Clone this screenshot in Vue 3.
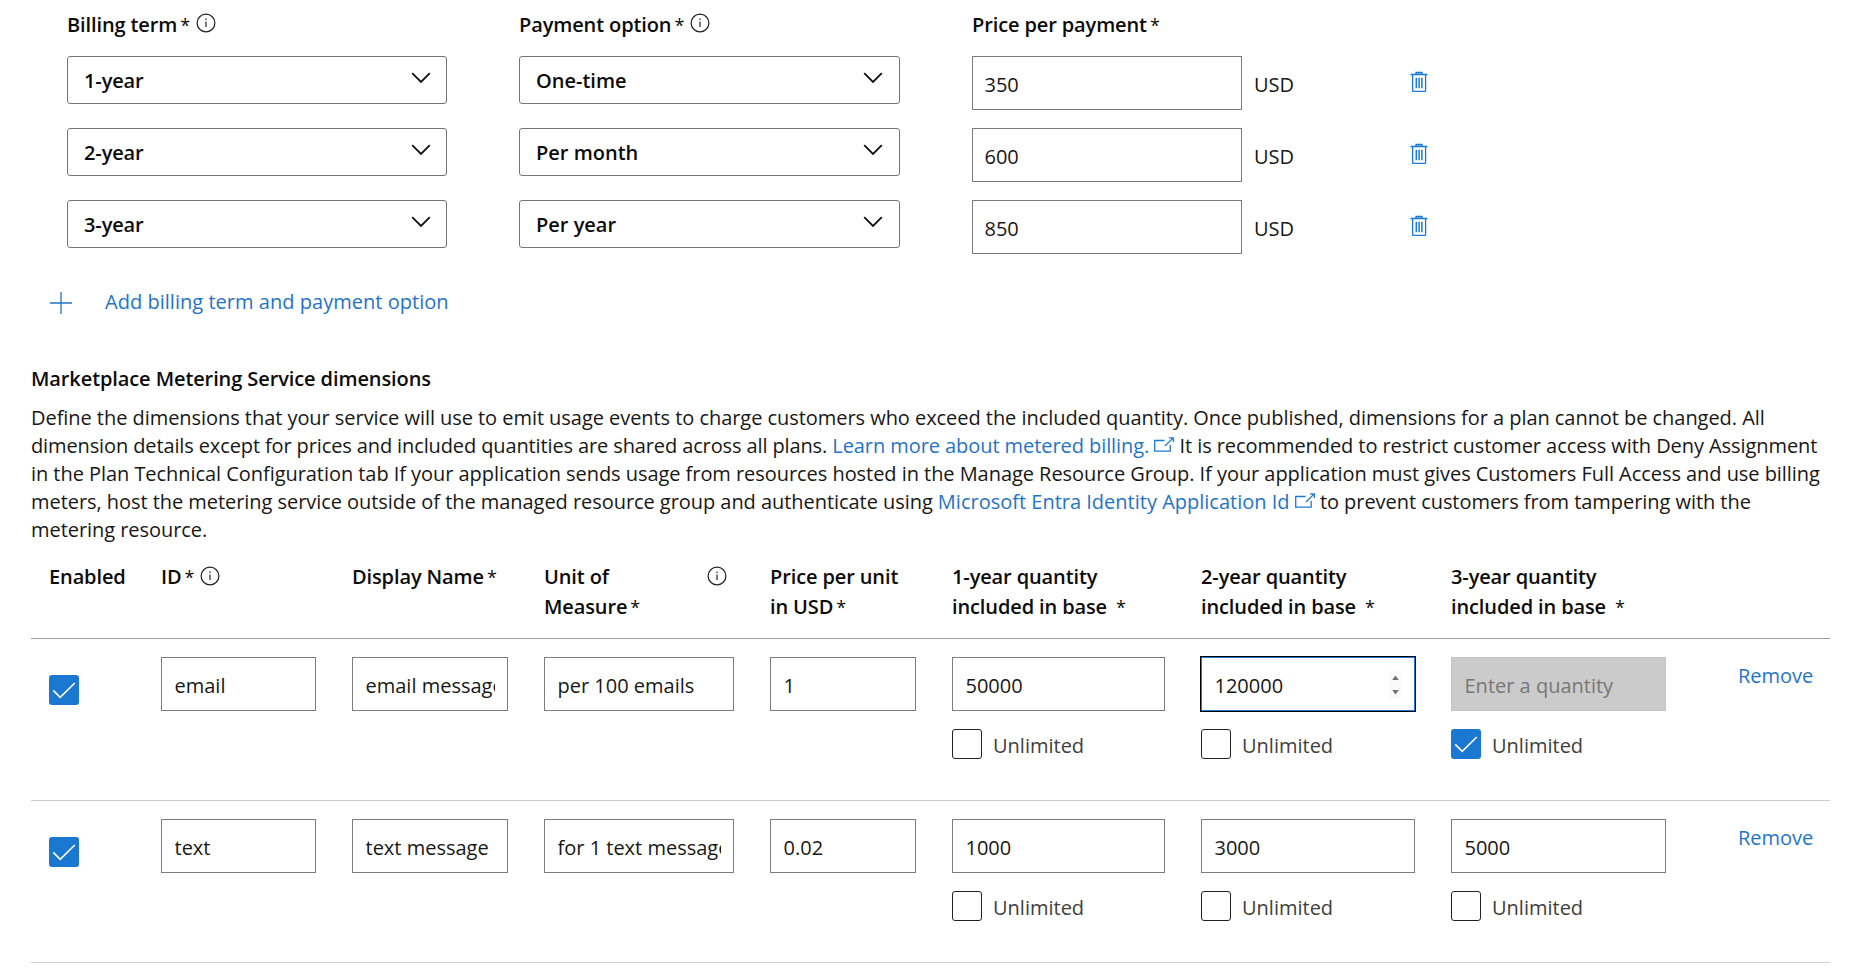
<script setup>
const terms = [
  { term: '1-year', option: 'One-time', price: '350' },
  { term: '2-year', option: 'Per month', price: '600' },
  { term: '3-year', option: 'Per year', price: '850' }
]

const columns = [
  { lines: ['Enabled'] },
  { lines: ['ID'], required: true, info: true },
  { lines: ['Display Name'], required: true },
  { lines: ['Unit of', 'Measure'], required: true, info: true, infoEnd: true },
  { lines: ['Price per unit', 'in USD'], required: true },
  { lines: ['1-year quantity', 'included in base'], required: true, wide: true },
  { lines: ['2-year quantity', 'included in base'], required: true, wide: true },
  { lines: ['3-year quantity', 'included in base'], required: true, wide: true },
  { lines: [] }
]

const dimensions = [
  {
    fields: [
      { value: 'email', size: 'w-id' },
      { value: 'email message', size: 'w-name' },
      { value: 'per 100 emails', size: 'w-unit' },
      { value: '1', size: 'w-price' }
    ],
    quantities: [
      { value: '50000', size: 'w-q1' },
      { value: '120000', size: 'w-q2', focused: true },
      { value: 'Enter a quantity', size: 'w-q3', disabled: true, unlimited: true }
    ]
  },
  {
    fields: [
      { value: 'text', size: 'w-id' },
      { value: 'text message', size: 'w-name' },
      { value: 'for 1 text message', size: 'w-unit' },
      { value: '0.02', size: 'w-price' }
    ],
    quantities: [
      { value: '1000', size: 'w-q1' },
      { value: '3000', size: 'w-q2' },
      { value: '5000', size: 'w-q3' }
    ]
  }
]
</script>

<template>
  <main class="page">
    <section class="pricing">
      <div class="terms-row labels">
        <div class="label">Billing term<span class="req">*</span>
          <svg class="info" viewBox="0 0 20 20"><circle cx="10" cy="10" r="8.9" /><path d="M10 8.6v5.4M10 5.6v1.5" /></svg>
        </div>
        <div class="label">Payment option<span class="req">*</span>
          <svg class="info" viewBox="0 0 20 20"><circle cx="10" cy="10" r="8.9" /><path d="M10 8.6v5.4M10 5.6v1.5" /></svg>
        </div>
        <div class="label">Price per payment<span class="req">*</span></div>
      </div>
      <div v-for="t in terms" :key="t.term" class="terms-row">
        <div class="select">
          <span>{{ t.term }}</span>
          <svg class="chevron" viewBox="0 0 20 12"><path d="M1.2 1.2 10 10l8.8-8.8" /></svg>
        </div>
        <div class="select option">
          <span>{{ t.option }}</span>
          <svg class="chevron" viewBox="0 0 20 12"><path d="M1.2 1.2 10 10l8.8-8.8" /></svg>
        </div>
        <div class="field"><span class="value">{{ t.price }}</span></div>
        <span class="currency">USD</span>
        <svg class="trash" viewBox="0 0 18 22">
          <path class="lid" d="M6 3.5v-2h6v2" />
          <path d="M.5 3.5h17M2.6 3.5v15.900a1 1 0 0 0 1 1h11a1 1 0 0 0 1-1v-15.900" />
          <path class="bars" d="M6.300 6.800v10.400M9.100 6.800v10.400M11.900 6.800v10.400" />
        </svg>
      </div>
      <a class="add">
        <svg class="plus" viewBox="0 0 22 22"><path d="M11 0v22M0 11h22" /></svg>
        <span>Add billing term and payment option</span>
      </a>
    </section>

    <section class="metering">
      <h2>Marketplace Metering Service dimensions</h2>
      <p>
        <span class="line">Define the dimensions that your service will use to emit usage events to charge customers who exceed the included quantity. Once published, dimensions for a plan cannot be changed. All</span>
        <span class="line snug"><span class="tight">dimension details except for prices and included quantities are shared across all plans.</span> <a>Learn more about metered billing. <svg class="ext" viewBox="0 0 20 15"><path d="M10.500 3.500H.7v10.600h15.500V8" /><path d="M11 9 19.200.9M15 .8h4.300v4.300" /></svg></a> It is recommended to restrict customer access with Deny Assignment</span>
        <span class="line">in the Plan Technical Configuration tab If your application sends usage from resources hosted in the Manage Resource Group. If your application must gives Customers Full Access and use billing</span>
        <span class="line">meters, host the metering service outside of the managed resource group and authenticate using <a class="loose">Microsoft Entra Identity Application Id <svg class="ext" viewBox="0 0 20 15"><path d="M10.500 3.500H.7v10.600h15.500V8" /><path d="M11 9 19.200.9M15 .8h4.300v4.300" /></svg></a> to prevent customers from tampering with the</span>
        <span class="line">metering resource.</span>
      </p>

      <div class="grid head">
        <div v-for="(c, i) in columns" :key="i" class="th">
          <div>
            <div v-for="(l, j) in c.lines" :key="l" class="th-line">{{ l }}<span v-if="c.required && j === c.lines.length - 1" class="req" :class="{ wide: c.wide }">*</span></div>
          </div>
          <svg v-if="c.info" class="info" :class="{ end: c.infoEnd }" viewBox="0 0 20 20"><circle cx="10" cy="10" r="8.9" /><path d="M10 8.6v5.4M10 5.6v1.5" /></svg>
        </div>
      </div>

      <div v-for="(d, i) in dimensions" :key="i" class="grid body">
        <div class="enabled">
          <span class="check on"><svg viewBox="0 0 30 30"><path d="M4.200 15.400l7 7L25.800 8" /></svg></span>
        </div>
        <div v-for="f in d.fields" :key="f.size">
          <div class="field" :class="f.size"><span class="value">{{ f.value }}</span></div>
        </div>
        <div v-for="q in d.quantities" :key="q.size">
          <div class="field" :class="[q.size, { focused: q.focused, disabled: q.disabled }]">
            <span class="value">{{ q.value }}</span>
            <svg v-if="q.focused" class="spin" viewBox="0 0 13 28"><rect width="13" height="28" /><path d="M3.200 9l3.300-4.600L9.800 9zM3.200 19l3.300 4.600L9.800 19z" /></svg>
          </div>
          <div class="unlimited">
            <span class="check" :class="{ on: q.unlimited }"><svg v-if="q.unlimited" viewBox="0 0 30 30"><path d="M4.200 15.400l7 7L25.800 8" /></svg></span>
            <span>Unlimited</span>
          </div>
        </div>
        <a class="remove">Remove</a>
      </div>
    </section>
  </main>
</template>

<style>
body {
  background: #fff;
}
</style>

<style scoped>
.page {
  width: 1860px;
  height: 973px;
  overflow: hidden;
  font: 20px/28px "Open Sans", "Noto Sans", sans-serif;
  color: #171717;
  background: #fff;
}
.page,
.page * {
  box-sizing: border-box;
}
svg {
  display: block;
  flex: none;
  fill: none;
}
a {
  color: #1f74c8;
}

/* Billing terms */
.pricing {
  height: 365px;
  padding: 11px 0 0 67px;
}
.terms-row {
  display: grid;
  grid-template-columns: 452px 453px 282px 156px 18px;
  height: 72px;
  align-items: start;
}
.labels {
  height: 45px;
}
.label {
  display: flex;
  color: #0c0c0c;
  font-weight: 600;
  letter-spacing: -0.12px;
}
.req {
  margin-left: 3px;
  font-size: 18px;
  font-weight: 500;
}
.req.wide {
  margin-left: 9px;
}
.info {
  width: 20px;
  height: 20px;
  margin: 2px 0 0 6px;
  stroke: #222;
  stroke-width: 1.2;
}
.select {
  display: flex;
  justify-content: space-between;
  width: 380px;
  height: 48px;
  padding: 10px 15px 0 16px;
  border: 1px solid #757575;
  border-radius: 3px;
  color: #0c0c0c;
  font-weight: 600;
  letter-spacing: -0.12px;
}
.select.option {
  width: 381px;
  padding-right: 16px;
  letter-spacing: 0;
}
.chevron {
  width: 20px;
  height: 12px;
  margin-top: 5px;
  stroke: #111;
  stroke-width: 1.8;
}
.field {
  display: flex;
  justify-content: space-between;
  width: 270px;
  height: 54px;
  padding: 14px 12px 0 11.5px;
  border: 1px solid #7c7c7c;
  background: #fff;
}
.body .field {
  padding-left: 12.5px;
}
.value {
  flex: 1;
  overflow: hidden;
  height: 30px;
  white-space: nowrap;
}
.currency {
  padding-top: 15px;
}
.trash {
  width: 18px;
  height: 22px;
  margin-top: 14.5px;
  stroke: #1b7ad3;
  stroke-width: 1.3;
}
.trash .lid {
  fill: #a9cdef;
}
.trash .bars {
  stroke-width: 1.5;
}
.add {
  display: flex;
  margin: 16px 0 0 -17px;
  letter-spacing: 0.03px;
}
.plus {
  width: 22px;
  height: 22px;
  margin: 4px 33px 0 0;
  stroke: #1f74c8;
  stroke-width: 1.3;
}

/* Metering dimensions */
.metering {
  padding: 0 30px 0 31px;
}
h2 {
  margin: 0 0 11px;
  font-size: 20px;
  line-height: 28px;
  font-weight: 600;
  letter-spacing: -0.1px;
  color: #0c0c0c;
}
p {
  margin: 0 0 18px;
}
.line {
  display: block;
  white-space: nowrap;
  letter-spacing: -0.05px;
}
.snug {
  letter-spacing: -0.07px;
}
.tight {
  letter-spacing: -0.12px;
}
.loose {
  letter-spacing: 0;
}
.ext {
  display: inline-block;
  width: 20px;
  height: 15px;
  vertical-align: 1px;
  stroke: #1b7ad3;
  stroke-width: 1.3;
}
.grid {
  display: grid;
  grid-template-columns: 112px 191px 192px 226px 182px 249px 250px 287px 1fr;
  padding-left: 18px;
}
.head {
  height: 77px;
  border-bottom: 1px solid #9b9b9b;
  color: #0c0c0c;
  font-weight: 600;
  line-height: 30px;
  letter-spacing: -0.12px;
}
.th {
  display: flex;
}
.th-line {
  display: flex;
  white-space: nowrap;
}
.th .info {
  margin-top: 4px;
}
.th .info.end {
  margin-left: 67px;
}
.body {
  height: 162px;
  padding-top: 18px;
  border-bottom: 1px solid #cfcfcf;
}
.w-id { width: 155px; }
.w-name { width: 156px; }
.w-unit { width: 190px; }
.w-price { width: 146px; }
.w-q1 { width: 213px; }
.w-q2 { width: 214px; }
.w-q3 { width: 215px; }
.field.focused {
  border-color: #1b7ad3;
  box-shadow: 0 0 0 1px #000;
}
.field.disabled {
  border-color: #c4c4c4;
  background: #cbcbcb;
  color: #777;
}
.spin {
  width: 13px;
  height: 28px;
  margin-top: -1px;
}
.spin rect {
  fill: #fafafa;
}
.spin path {
  fill: #707070;
}
.check {
  display: block;
  width: 30px;
  height: 30px;
  border: 1px solid #222;
  border-radius: 3px;
}
.check.on {
  border: 0;
  background: #1a78d2;
}
.check svg {
  stroke: #fff;
  stroke-width: 1.6;
}
.enabled {
  padding-top: 18px;
}
.unlimited {
  display: flex;
  gap: 11px;
  padding-top: 18px;
  color: #404040;
}
.unlimited span:last-child {
  padding-top: 3px;
}
.remove {
  padding-top: 5px;
}
</style>
